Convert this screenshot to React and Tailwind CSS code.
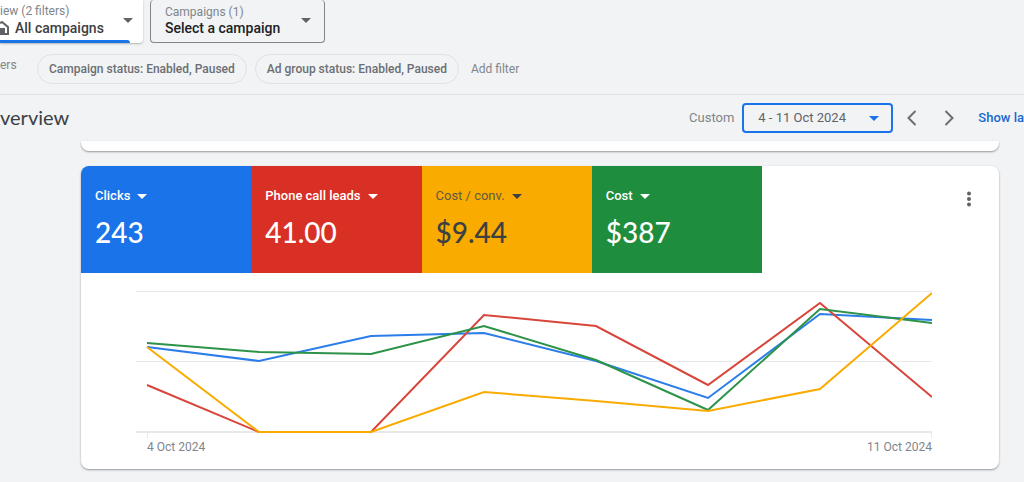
const metrics = [
  { label: "Clicks", value: "243", tile: "bg-[#1a73e8] text-white font-medium", number: "text-white" },
  { label: "Phone call leads", value: "41.00", tile: "bg-[#d93025] text-white font-medium", number: "text-white" },
  { label: "Cost / conv.", value: "$9.44", tile: "bg-[#f9ab00] text-[#5f5a45]", number: "text-[#3c4043]" },
  { label: "Cost", value: "$387", tile: "bg-[#1e8e3e] text-white font-medium", number: "text-white" },
];

const days = [11, 123, 235, 348, 460, 572, 684, 796];

// y values, 1 = top grid line, 142 = base line
const series = [
  { name: "Clicks", color: "#2b7de9", values: [57, 71, 46, 43, 71, 108, 24, 30] },
  { name: "Phone call leads", color: "#d8453a", values: [95, 142, 142, 25, 36, 95, 13, 107] },
  { name: "Cost", color: "#2c9348", values: [53, 62, 64, 36, 70, 120, 19, 33] },
  { name: "Cost / conv.", color: "#f9ab00", values: [57, 142, 142, 102, 111, 121, 99, 3] },
];

const Caret = ({ className }) => (
  <svg viewBox="0 0 10 5" className={`h-[5px] w-[10px] shrink-0 ${className || ""}`} fill="currentColor" aria-hidden="true">
    <path d="M0 0h10L5 5z" />
  </svg>
);

const Chip = ({ children }) => (
  <button className="h-[30px] rounded-full border border-[#dfe1e5] px-[11px] text-[12px] font-medium text-[#6b6e73]">
    {children}
  </button>
);

const Chevron = ({ d, label }) => (
  <button aria-label={label} className="flex h-6 w-6 items-center justify-center text-[#6b6e73]">
    <svg viewBox="0 0 10 16" className="h-4 w-[10px]" fill="none" stroke="currentColor" strokeWidth="2" aria-hidden="true">
      <path d={d} />
    </svg>
  </button>
);

function ScopeBar() {
  return (
    <div className="flex items-start gap-[7px]">
      <button aria-haspopup="menu" className="flex h-[43px] w-[143px] flex-col rounded-br bg-white text-left shadow-[0_1px_2px_rgba(60,64,67,0.35)]">
        <span className="flex w-full flex-1 items-center justify-between pr-[10px]">
          <span className="flex flex-col">
            <span className="text-[12px] leading-4 text-[#80868b]">iew (2 filters)</span>
            <span className="flex items-center gap-[6px] text-[14px] leading-[18px] font-medium text-[#3c4043]">
              <svg viewBox="0 0 9 14" className="h-[14px] w-[9px]" fill="none" stroke="#5f6368" strokeWidth="2" aria-hidden="true">
                <path d="M0 2l2-1 6 5v7H0" />
                <path d="M0 7h5v6H0z" fill="#5f6368" stroke="none" />
              </svg>
              All campaigns
            </span>
          </span>
          <Caret className="text-[#5f6368]" />
        </span>
        <span className="h-[3px] w-[130px] rounded-tr bg-[#1a73e8]" />
      </button>

      <button aria-haspopup="menu" className="flex h-[43px] w-[175px] items-center justify-between rounded border border-t-0 border-[#80868b] pr-[13px] pb-[2px] pl-[14px] text-left">
        <span className="flex flex-col">
          <span className="text-[12px] leading-4 text-[#80868b]">Campaigns (1)</span>
          <span className="text-[14px] leading-4 font-medium text-[#202124]">Select a campaign</span>
        </span>
        <Caret className="text-[#5f6368]" />
      </button>
    </div>
  );
}

function TrendChart() {
  return (
    <div className="pt-[17px] pr-[67px] pb-[14px] pl-[55px]">
      <svg viewBox="0 0 796 149" preserveAspectRatio="none" className="block h-[149px] w-full" fill="none" role="img" aria-label="Daily trend">
        <g stroke="#e8e8e8" strokeWidth="1">
          <path d="M0 1.5h796M0 71.5h796" />
          <path d="M0 142h796" strokeWidth="2" />
          <path d="M11.5 142v6M795.5 142v6" />
        </g>
        {series.map((s) => (
          <polyline
            key={s.name}
            points={days.map((x, i) => `${x},${s.values[i]}`).join(" ")}
            stroke={s.color}
            strokeWidth="2"
            vectorEffect="non-scaling-stroke"
          />
        ))}
      </svg>
      <div className="flex justify-between pl-[11px] text-[12px] leading-4 text-[#80868b]">
        <span>4 Oct 2024</span>
        <span>11 Oct 2024</span>
      </div>
    </div>
  );
}

export default function App() {
  return (
    <div className="min-h-screen overflow-hidden bg-[#f1f3f4] font-[Roboto,sans-serif]">
      <header className="border-b border-[#dfe1e5] pb-[10px]">
        <ScopeBar />
        <div className="mt-[11px] flex items-center">
          <span className="w-[37px] pb-2 text-[12px] text-[#80868b]">ers</span>
          <div className="flex items-center gap-2">
            <Chip>Campaign status: Enabled, Paused</Chip>
            <Chip>Ad group status: Enabled, Paused</Chip>
          </div>
          <button className="ml-3 text-[12px] text-[#80868b]">Add filter</button>
        </div>
      </header>

      <div className="flex h-[46px] items-center justify-between">
        <h1 className="pb-[2px] font-[Lato,sans-serif] text-[20px] text-[#3c4043]">verview</h1>
        <div className="flex items-center whitespace-nowrap">
          <span className="text-[13px] text-[#80868b]">Custom</span>
          <button aria-haspopup="dialog" className="ml-2 flex h-[30px] w-[151px] items-center justify-between rounded border-2 border-[#1a73e8] pr-3 pl-[14px] text-[13px] text-[#5f6368]">
            4 - 11 Oct 2024
            <Caret className="text-[#1a73e8]" />
          </button>
          <div className="ml-[7px] flex gap-[13px]">
            <Chevron label="Previous period" d="M8.500 1L1.500 8l7 7" />
            <Chevron label="Next period" d="M1.500 1l7 7-7 7" />
          </div>
          <a href="#" className="ml-[17px] text-[13px] font-medium text-[#1967d2]">Show la</a>
        </div>
      </div>

      <main className="flex flex-col gap-[15px] pr-[25px] pb-3 pl-[81px]">
        <div className="h-[10px] rounded-b-lg bg-white shadow-[0_1px_2px_rgba(60,64,67,0.5)]" />

        <section className="overflow-hidden rounded-lg bg-white shadow-[0_1px_2px_rgba(60,64,67,0.5)]">
          <div className="flex items-start justify-between">
            <div className="grid w-[681px] grid-cols-4">
              {metrics.map((m) => (
                <div key={m.label} className={`h-[107px] px-[14px] pt-[22px] ${m.tile}`}>
                  <button aria-haspopup="menu" className="flex items-center gap-[7px] text-[13px] leading-4">
                    {m.label}
                    <Caret className={m.number} />
                  </button>
                  <p className={`mt-[10px] font-[Lato,sans-serif] text-[28px] leading-9 font-medium ${m.number}`}>{m.value}</p>
                </div>
              ))}
            </div>
            <button aria-label="More options" className="mt-[21px] mr-[18px] flex h-6 w-6 items-center justify-center text-[#5f6368]">
              <svg viewBox="0 0 4 16" className="h-4 w-1" fill="currentColor" aria-hidden="true">
                <circle cx="2" cy="2.500" r="2" />
                <circle cx="2" cy="8" r="2" />
                <circle cx="2" cy="13.500" r="2" />
              </svg>
            </button>
          </div>
          <TrendChart />
        </section>
      </main>
    </div>
  );
}
